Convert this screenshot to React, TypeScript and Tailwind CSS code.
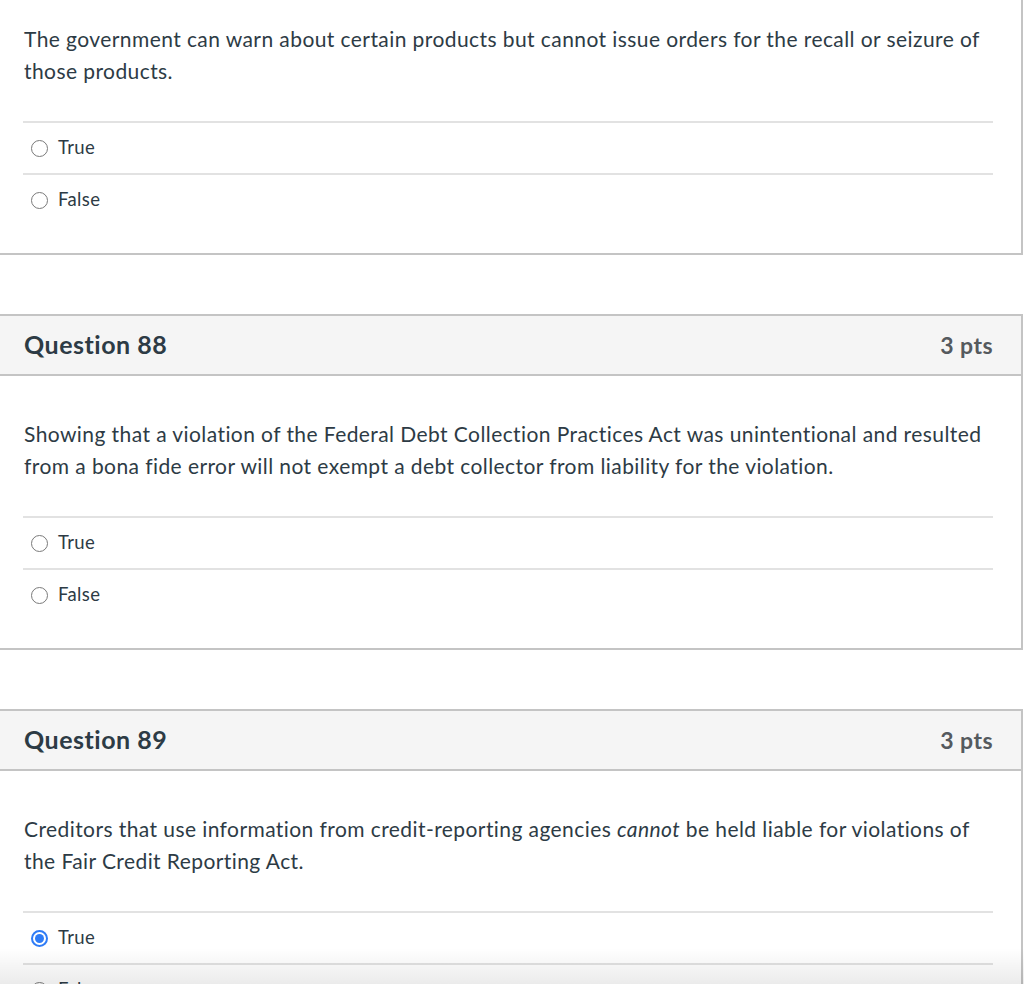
import React from "react";

function Radio({ checked }: { checked?: boolean }) {
  if (checked) {
    return (
      <span className="flex h-[17px] w-[17px] items-center justify-center rounded-full border-[2px] border-[#2f7cf6] bg-white">
        <span className="h-[9px] w-[9px] rounded-full bg-[#2f7cf6]" />
      </span>
    );
  }
  return <span className="h-[17px] w-[17px] rounded-full border border-[#7a7a7a] bg-white" />;
}

function Answers({ selected }: { selected?: string }) {
  return (
    <div className="mt-[34px] mr-[28px] ml-[23px]">
      {["True", "False"].map((a) => (
        <div key={a} className="flex h-[52px] items-center border-t-2 border-[#e2e2e2] pl-[8px]">
          <Radio checked={selected === a} />
          <span className="ml-[10px] text-[18.5px] tracking-[0.02em] text-[#2d3b45]">{a}</span>
        </div>
      ))}
    </div>
  );
}

function Card({
  num,
  children,
  selected,
}: {
  num?: number;
  children: React.ReactNode;
  selected?: string;
}) {
  return (
    <div
      className={
        "w-[1023px] border-r-2 border-b-2 border-[#c4c4c4] bg-white " +
        (num ? "border-t-2" : "")
      }
    >
      {num ? (
        <div className="flex h-[60px] items-center justify-between border-b-2 border-[#c4c4c4] bg-[#f5f5f5] pr-[28px] pl-[24px]">
          <span className="text-[25px] font-bold tracking-[0.02em] text-[#2d3b45]">Question {num}</span>
          <span className="text-[23px] font-bold tracking-[0.02em] text-[#555a5e]">3 pts</span>
        </div>
      ) : null}
      <div className={num ? "pt-[42px] pb-[28px]" : "pt-[23px] pb-[28px]"}>
        <p className="pr-[28px] pl-[24px] text-[21px] leading-[32px] tracking-[0.02em] text-[#2d3b45]">
          {children}
        </p>
        <Answers selected={selected} />
      </div>
    </div>
  );
}

export default function App() {
  return (
    <div
      className="relative h-[984px] w-[1024px] overflow-hidden bg-white"
      style={{ fontFamily: "Lato, 'Open Sans', sans-serif" }}
    >
      <div className="flex flex-col gap-[59px]">
        <Card>
          The government can warn about certain products but cannot issue orders for the recall or
          seizure of those products.
        </Card>
        <Card num={88}>
          Showing that a violation of the Federal Debt Collection Practices Act was unintentional and
          resulted from a bona fide error will not exempt a debt collector from liability for the
          violation.
        </Card>
        <Card num={89} selected="True">
          Creditors that use information from credit-reporting agencies <em>cannot</em> be held liable
          for violations of the Fair Credit Reporting Act.
        </Card>
      </div>
      <div className="pointer-events-none absolute right-0 bottom-0 left-0 h-[36px] bg-gradient-to-b from-transparent to-[rgba(0,0,0,0.08)]" />
    </div>
  );
}
